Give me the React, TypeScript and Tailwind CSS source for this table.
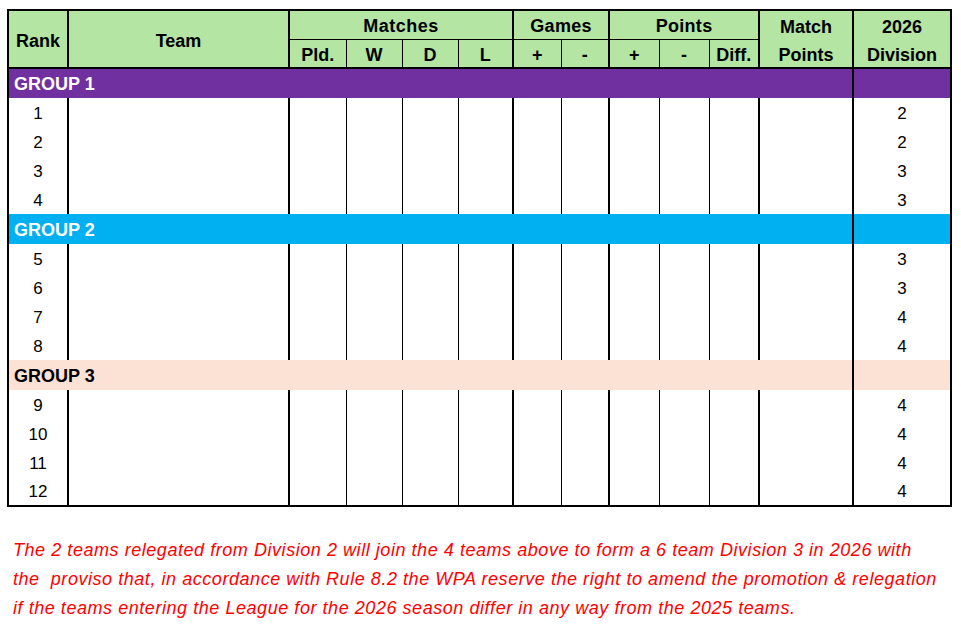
import React from 'react';

type Group = { label: string; bg: string; text: string; rows: { rank: number; div: number }[] };

const groups: Group[] = [
  {
    label: 'GROUP 1',
    bg: 'bg-[#7030a0]',
    text: 'text-white',
    rows: [
      { rank: 1, div: 2 },
      { rank: 2, div: 2 },
      { rank: 3, div: 3 },
      { rank: 4, div: 3 },
    ],
  },
  {
    label: 'GROUP 2',
    bg: 'bg-[#00b0f0]',
    text: 'text-white',
    rows: [
      { rank: 5, div: 3 },
      { rank: 6, div: 3 },
      { rank: 7, div: 4 },
      { rank: 8, div: 4 },
    ],
  },
  {
    label: 'GROUP 3',
    bg: 'bg-[#fbe2d5]',
    text: 'text-black',
    rows: [
      { rank: 9, div: 4 },
      { rank: 10, div: 4 },
      { rank: 11, div: 4 },
      { rank: 12, div: 4 },
    ],
  },
];

// right border per statistic column: thick closes a header group
const statCols = [
  'border-r',
  'border-r',
  'border-r',
  'border-r-2',
  'border-r',
  'border-r-2',
  'border-r',
  'border-r',
  'border-r-2',
  'border-r-2',
];

const subHeads = ['Pld.', 'W', 'D', 'L', '+', '-', '+', '-', 'Diff.'];

function App() {
  return (
    <div className="min-h-screen bg-white pt-[9px] pl-[7px] font-['Liberation_Sans',Arial,sans-serif] text-black">
      <table className="table-fixed border-collapse border-2 border-black w-[944px]">
        <colgroup>
          <col className="w-[60px]" />
          <col className="w-[221px]" />
          <col className="w-[57px]" />
          <col className="w-[56px]" />
          <col className="w-[56px]" />
          <col className="w-[55px]" />
          <col className="w-[48px]" />
          <col className="w-[48px]" />
          <col className="w-[50px]" />
          <col className="w-[50px]" />
          <col className="w-[50px]" />
          <col className="w-[94px]" />
          <col className="w-[98px]" />
        </colgroup>
        <thead className="bg-[#b4e5a2] text-[18px] font-bold leading-none">
          <tr className="h-[29px]">
            <th rowSpan={2} className="border-r-2 border-b-2 border-black pt-[4px]">Rank</th>
            <th rowSpan={2} className="border-r-2 border-b-2 border-black pt-[4px]">Team</th>
            <th colSpan={4} className="border-r-2 border-b border-black pt-[3px] tracking-[0.5px]">Matches</th>
            <th colSpan={2} className="border-r-2 border-b border-black pt-[3px] tracking-[0.3px]">Games</th>
            <th colSpan={3} className="border-r-2 border-b border-black pt-[3px] tracking-[0.3px]">Points</th>
            <th className="border-r-2 border-black pt-[3px]">Match</th>
            <th className="border-black pt-[3px]">2026</th>
          </tr>
          <tr className="h-[29px]">
            {subHeads.map((h, i) => (
              <th key={i} className={`${statCols[i]} border-b-2 border-black pt-[3px]`}>
                {h}
              </th>
            ))}
            <th className="border-r-2 border-b-2 border-black pt-[3px]">Points</th>
            <th className="border-b-2 border-black pt-[3px]">Division</th>
          </tr>
        </thead>
        <tbody className="text-[17px] leading-none">
          {groups.map((g) => (
            <React.Fragment key={g.label}>
              <tr className={`h-[30px] ${g.bg} ${g.text}`}>
                <td colSpan={12} className="border-r-2 border-black pl-[5px] pt-[1px] text-[18px] font-bold">
                  {g.label}
                </td>
                <td />
              </tr>
              {g.rows.map((r) => (
                <tr key={r.rank} className="h-[29px]">
                  <td className="border-r-2 border-black pt-[1px] text-center">{r.rank}</td>
                  <td className="border-r-2 border-black" />
                  {statCols.map((c, i) => (
                    <td key={i} className={`${c} border-black`} />
                  ))}
                  <td className="pt-[1px] text-center">{r.div}</td>
                </tr>
              ))}
            </React.Fragment>
          ))}
        </tbody>
      </table>

      <div className="mt-[29px] pl-[6px] text-[18px] italic tracking-[0.55px] leading-[29px] text-[#ff0000] whitespace-pre">
        <div>The 2 teams relegated from Division 2 will join the 4 teams above to form a 6 team Division 3 in 2026 with</div>
        <div>the  proviso that, in accordance with Rule 8.2 the WPA reserve the right to amend the promotion &amp; relegation</div>
        <div>if the teams entering the League for the 2026 season differ in any way from the 2025 teams.</div>
      </div>
    </div>
  );
}

export default App;
